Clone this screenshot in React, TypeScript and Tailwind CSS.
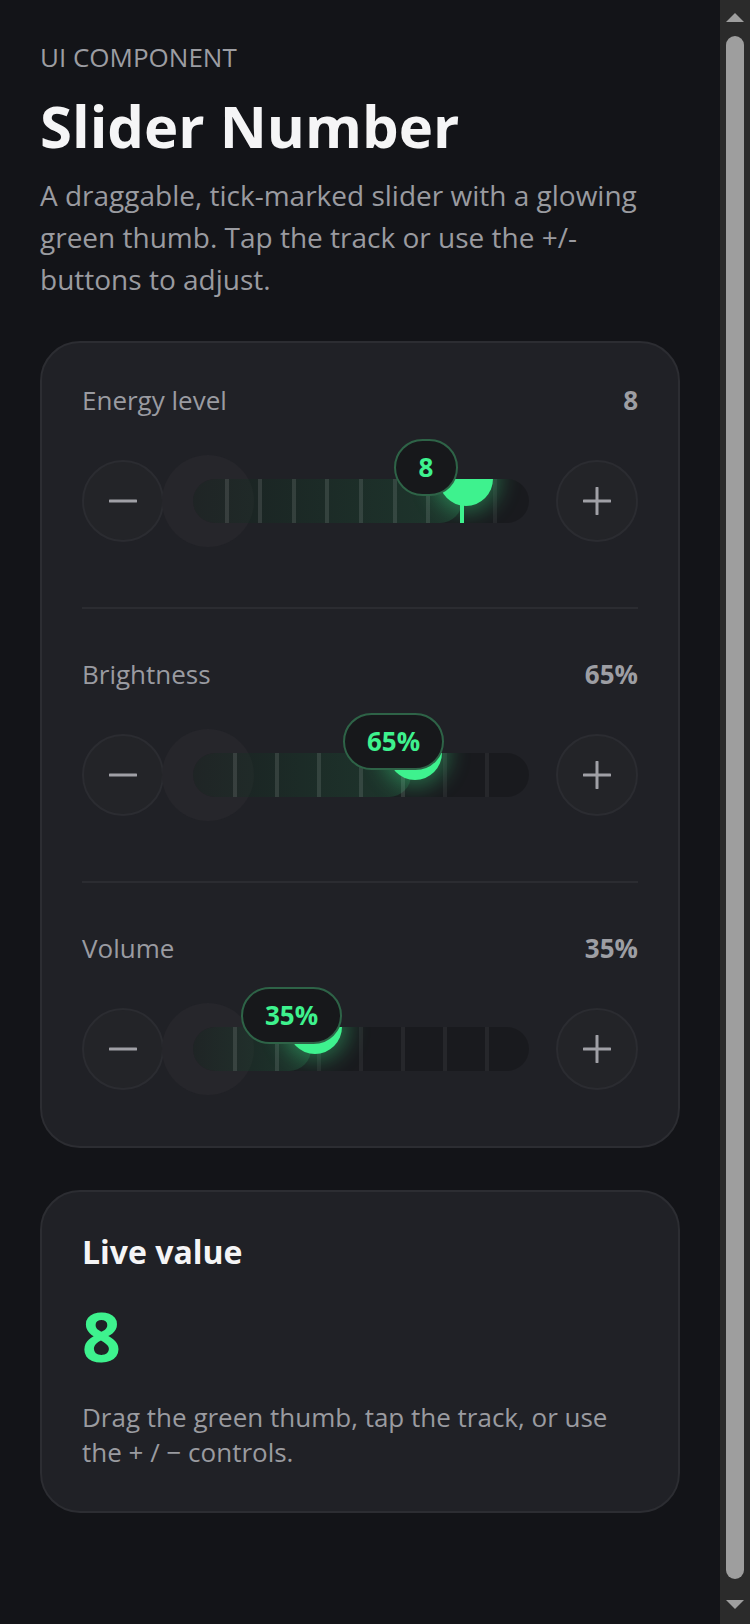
import React from "react";

type SliderDef = {
  label: string;
  display: string;
  pct: number;
  ticks: number;
  bubbleLeft: number;
  activeTick?: number;
};

const TRACK_W = 336;

const sliders: SliderDef[] = [
  { label: "Energy level", display: "8", pct: 0.8, ticks: 10, bubbleLeft: 201, activeTick: 8 },
  { label: "Brightness", display: "65%", pct: 0.65, ticks: 8, bubbleLeft: 150 },
  { label: "Volume", display: "35%", pct: 0.35, ticks: 8, bubbleLeft: 48 },
];

function RoundButton({ kind }: { kind: "minus" | "plus" }) {
  return (
    <button
      type="button"
      className="flex h-[82px] w-[82px] shrink-0 items-center justify-center rounded-full border-2 border-[#2b2c31] bg-[#232428]"
    >
      <svg width="28" height="28" viewBox="0 0 28 28" fill="none">
        <line x1="1" y1="14" x2="27" y2="14" stroke="#a0a0a6" strokeWidth="3" strokeLinecap="round" />
        {kind === "plus" && (
          <line x1="14" y1="1" x2="14" y2="27" stroke="#a0a0a6" strokeWidth="3" strokeLinecap="round" />
        )}
      </svg>
    </button>
  );
}

function SliderRow({ s, index }: { s: SliderDef; index: number }) {
  const thumbX = s.pct * TRACK_W + 4;
  const tickEls = [];
  for (let i = 1; i < s.ticks; i++) {
    const x = (i / s.ticks) * TRACK_W;
    const filled = x <= s.pct * TRACK_W + 1;
    const active = s.activeTick === i;
    tickEls.push(
      <div
        key={i}
        className={
          "absolute inset-y-0 w-[4px] " +
          (active ? "z-10 bg-[#3ef28e]" : filled ? "bg-white/[0.11]" : "bg-white/[0.06]")
        }
        style={{ left: x - 2 }}
      />
    );
  }
  const isLast = index === sliders.length - 1;
  return (
    <div
      className={
        (index === 0 ? "pt-0 " : "border-t-2 border-[#2b2c31] pt-[48px] ") +
        (isLast ? "pb-[16px]" : "pb-[65px]")
      }
    >
      <div className="flex h-[36px] items-center justify-between">
        <span className="text-[26px] text-[#9a9ba1]">{s.label}</span>
        <span className="text-[26px] font-bold text-[#9d9ea3]">{s.display}</span>
      </div>
      <div className="mt-[41px] flex h-[82px] items-center">
        <RoundButton kind="minus" />
        <div className="relative ml-[29px] mr-[27px] h-[44px] flex-1">
          <div className="absolute left-[-31px] top-[-24px] h-[92px] w-[92px] rounded-full bg-[#26262b]" />
          <div className="relative h-full overflow-hidden rounded-full bg-black/20">
            <div
              className="absolute inset-y-0 left-0 rounded-full bg-[linear-gradient(90deg,rgba(62,242,142,0.03),rgba(62,242,142,0.13))]"
              style={{ width: `${s.pct * 100}%` }}
            />
            {tickEls}
            <div
              className="absolute top-[-27px] h-[54px] w-[54px] rounded-full bg-[#3ef28e] shadow-[0_0_22px_6px_rgba(62,242,142,0.38)]"
              style={{ left: thumbX - 27 }}
            />
          </div>
          <div
            className="absolute top-[-40px] flex h-[57px] min-w-[64px] items-center justify-center rounded-full border-2 border-[#2e6347] bg-[#17181b] px-[22px] text-[26px] font-bold text-[#3ef28e]"
            style={{ left: s.bubbleLeft }}
          >
            {s.display}
          </div>
        </div>
        <RoundButton kind="plus" />
      </div>
    </div>
  );
}

function ScrollRail() {
  return (
    <div className="sticky top-0 flex h-screen w-[30px] shrink-0 flex-col items-center self-start bg-[#2b2b2b] pb-[15px] pt-[13px]">
      <div className="h-0 w-0 border-x-[9px] border-b-[9px] border-x-transparent border-b-[#9e9e9e]" />
      <div className="mt-[14px] w-[18px] flex-1 rounded-full bg-[#9e9e9e]" />
      <div className="mt-[21px] h-0 w-0 border-x-[9px] border-t-[9px] border-x-transparent border-t-[#9e9e9e]" />
    </div>
  );
}

export default function App() {
  return (
    <div className="flex bg-[#131418] font-['Open_Sans',sans-serif]">
      <main className="min-w-0 flex-1 px-[40px] pb-[135px] pt-[38px]">
        <div className="w-[640px]">
          <div className="text-[26px] leading-[39px] text-[#9c9da2]">UI COMPONENT</div>
          <h1 className="mt-[14px] text-[58px] font-bold leading-[1.2] text-[#f5f5f6]">Slider Number</h1>
          <p className="mt-[13px] text-[28px] leading-[42px] text-[#9a9ba0]">
            A draggable, tick-marked slider with a glowing green thumb. Tap the track or use the +/- buttons to adjust.
          </p>

          <div className="mt-[41px] rounded-[40px] border-2 border-[#2c2d32] bg-[#202126] p-[40px]">
            {sliders.map((s, i) => (
              <SliderRow key={s.label} s={s} index={i} />
            ))}
          </div>

          <div className="mt-[42px] rounded-[40px] border-2 border-[#2c2d32] bg-[#202126] px-[40px] pb-[41px] pt-[40px]">
            <div className="text-[32px] font-bold leading-[40px] text-[#f5f5f6]">Live value</div>
            <div className="mt-[30px] text-[68px] font-bold leading-[68px] text-[#3ef28e]">8</div>
            <p className="mt-[30px] text-[26px] leading-[35px] text-[#9a9ba0]">
              Drag the green thumb, tap the track, or use the + / − controls.
            </p>
          </div>
        </div>
      </main>
      <ScrollRail />
    </div>
  );
}
